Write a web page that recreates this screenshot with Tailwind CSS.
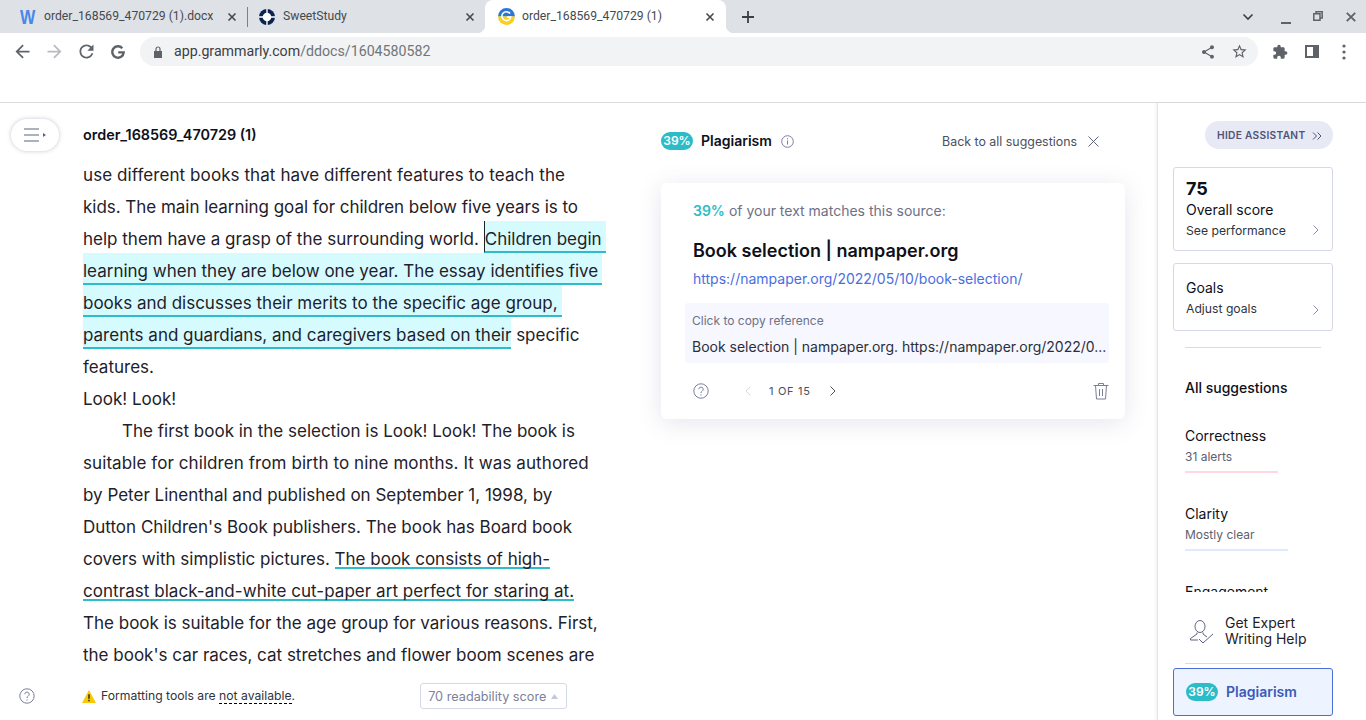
<!DOCTYPE html>
<html lang="en">
<head>
    <meta charset="UTF-8">
    <meta name="viewport" content="width=device-width, initial-scale=1.0">
    <title>order_168569_470729 (1)</title>
    <script src="https://cdn.jsdelivr.net/npm/@tailwindcss/browser@4"></script>
</head>
<body class="w-[1366px] h-[720px] overflow-hidden flex flex-col bg-white font-['Inter',sans-serif] text-[#0e101a]">

    <!-- tab strip -->
    <div class="h-[33px] bg-[#dee1e6] flex font-['Roboto',sans-serif] text-[12.2px] text-[#45494e] shrink-0">
        <div class="w-[247px] flex items-center pl-[20px] pr-[10px]">
            <span class="w-[15px] mr-[9px] font-['Liberation_Sans',sans-serif] text-[21px] leading-none text-[#4a86e8] scale-x-[0.77] origin-left font-bold">W</span>
            <span class="flex-1 whitespace-nowrap">order_168569_470729 (1).docx</span>
            <svg class="w-[10px] h-[10px]" viewBox="0 0 10 10" stroke="#45494e" stroke-width="1.6"><path d="M1.500 1.500l7 7M8.500 1.500l-7 7"/></svg>
        </div>
        <div class="w-px h-[20px] bg-[#7d8186] self-center"></div>
        <div class="w-[237px] flex items-center pl-[11px] pr-[10px]">
            <svg class="w-[16px] h-[16px] mr-[8px]" viewBox="0 0 16 16"><circle cx="8" cy="8" r="8" fill="#0b2350"/><circle cx="8" cy="8" r="4.300" fill="#fff"/><path d="M8 0v4M8 12v4M0 8h4M12 8h4" stroke="#fff" stroke-width="1.400"/></svg>
            <span class="flex-1">SweetStudy</span>
            <svg class="w-[10px] h-[10px]" viewBox="0 0 10 10" stroke="#45494e" stroke-width="1.6"><path d="M1.500 1.500l7 7M8.500 1.500l-7 7"/></svg>
        </div>
        <div class="relative w-[241px] bg-white rounded-t-[8px] flex items-center pl-[13px] pr-[11px] before:absolute before:-left-[8px] before:bottom-0 before:w-[8px] before:h-[8px] before:bg-[radial-gradient(circle_at_0_0,#dee1e6_8px,#ffffff_8.500px)] after:absolute after:-right-[8px] after:bottom-0 after:w-[8px] after:h-[8px] after:bg-[radial-gradient(circle_at_100%_0,#dee1e6_8px,#ffffff_8.500px)]">
            <svg class="w-[17px] h-[17px] mr-[7px]" viewBox="0 0 16 16"><path d="M0 8a8 8 0 0 1 16 0z" fill="#2a78d6"/><path d="M0 8a8 8 0 0 0 16 0z" fill="#f9d01c"/><path d="M11.300 5.200A4.200 4.200 0 1 0 12 8.600H8.600" fill="none" stroke="#fff" stroke-width="1.500"/></svg>
            <span class="flex-1">order_168569_470729 (1)</span>
            <svg class="w-[10px] h-[10px]" viewBox="0 0 10 10" stroke="#45494e" stroke-width="1.6"><path d="M1.500 1.500l7 7M8.500 1.500l-7 7"/></svg>
        </div>
        <div class="flex-1 flex items-center pl-[15px] pr-[10px]">
            <svg class="w-[14px] h-[14px]" viewBox="0 0 14 14" stroke="#3c4043" stroke-width="1.800"><path d="M7 1v12M1 7h12"/></svg>
            <div class="flex-1"></div>
            <svg class="w-[12px] h-[8px] mr-[27px]" viewBox="0 0 12 8" fill="none" stroke="#3c4043" stroke-width="1.600"><path d="M1.500 1.500L6 6l4.500-4.500"/></svg>
            <svg class="w-[10px] h-[10px] mt-[9px] mr-[22px]" viewBox="0 0 10 10" stroke="#5f6368" stroke-width="2"><path d="M0 7h10"/></svg>
            <svg class="w-[10px] h-[10px] -mt-[1px] mr-[23px]" viewBox="0 0 10 10" fill="none" stroke="#5f6368" stroke-width="1.500"><path d="M3 2.800V.800h6.200v6.200H7M.800 2.800H7v6.400H.800z"/></svg>
            <svg class="w-[10px] h-[10px]" viewBox="0 0 10 10" stroke="#5f6368" stroke-width="1.800"><path d="M.800.800l8.400 8.400M9.200.800L.800 9.200"/></svg>
        </div>
    </div>

    <!-- toolbar -->
    <div class="h-[37px] flex items-center pl-[12px] shrink-0">
        <svg class="w-[21px] h-[21px] mr-[11px]" viewBox="0 0 24 24" fill="#5f6368"><path d="M20 11H7.830l5.590-5.590L12 4l-8 8 8 8 1.410-1.410L7.830 13H20v-2z"/></svg>
        <svg class="w-[21px] h-[21px] mr-[11px] rotate-180" viewBox="0 0 24 24" fill="#b9bbbe"><path d="M20 11H7.830l5.590-5.590L12 4l-8 8 8 8 1.410-1.410L7.830 13H20v-2z"/></svg>
        <svg class="w-[21px] h-[21px] mr-[14px]" viewBox="0 0 24 24" fill="#5f6368"><path d="M17.650 6.350C16.200 4.900 14.210 4 12 4c-4.420 0-7.990 3.580-7.990 8s3.570 8 7.990 8c3.730 0 6.840-2.550 7.730-6h-2.080c-.82 2.330-3.040 4-5.650 4-3.310 0-6-2.690-6-6s2.690-6 6-6c1.660 0 3.140.69 4.220 1.780L13 11h7V4l-2.350 2.350z"/></svg>
        <svg class="w-[14px] h-[14px] mr-[15px]" viewBox="0 0 14 14" fill="none" stroke="#5f6368" stroke-width="2.400"><path d="M11.300 3.200A5.700 5.700 0 1 0 12.700 7.400H7.200"/></svg>
        <div class="w-[1118px] h-[29px] bg-[#f1f3f4] rounded-full flex items-center pl-[14px] pr-[10px] font-['Roboto',sans-serif] text-[14.200px]">
            <svg class="w-[8px] h-[12px] mr-[12px]" viewBox="0 0 8 12" fill="#5f6368"><path d="M0 5h8v7H0z"/><path d="M2 5V3a2 2 0 0 1 4 0v2" fill="none" stroke="#5f6368" stroke-width="1.200"/></svg>
            <span class="text-[#3c4043]">app.grammarly.com</span><span class="text-[#70757a]">/ddocs/1604580582</span>
            <div class="flex-1"></div>
            <svg class="w-[16px] h-[16px] mr-[15px]" viewBox="0 0 24 24" fill="#5f6368"><path d="M18 16.080c-.76 0-1.440.3-1.960.77L8.910 12.700c.05-.23.09-.46.09-.7s-.04-.47-.09-.7l7.050-4.110c.54.5 1.250.81 2.040.81 1.660 0 3-1.340 3-3s-1.340-3-3-3-3 1.340-3 3c0 .24.04.47.09.7L8.040 9.810C7.500 9.310 6.790 9 6 9c-1.660 0-3 1.340-3 3s1.340 3 3 3c.79 0 1.500-.31 2.040-.81l7.120 4.160c-.05.21-.08.43-.08.65 0 1.610 1.310 2.920 2.920 2.920 1.610 0 2.920-1.310 2.920-2.920s-1.310-2.920-2.920-2.920z"/></svg>
            <svg class="w-[17px] h-[17px]" viewBox="0 0 24 24" fill="#5f6368"><path d="M22 9.240l-7.190-.62L12 2 9.190 8.630 2 9.240l5.460 4.730L5.820 21 12 17.270 18.180 21l-1.630-7.030L22 9.240zM12 15.400l-3.760 2.270 1-4.280-3.320-2.880 4.380-.38L12 6.100l1.710 4.040 4.380.38-3.320 2.880 1 4.280L12 15.400z"/></svg>
        </div>
        <svg class="w-[16px] h-[16px] ml-[14px]" viewBox="0 0 24 24" fill="#5f6368"><path d="M20.500 11H19V7c0-1.100-.9-2-2-2h-4V3.500C13 2.120 11.880 1 10.500 1S8 2.120 8 3.500V5H4c-1.100 0-1.990.9-1.990 2v3.800H3.500c1.490 0 2.700 1.210 2.700 2.700s-1.210 2.700-2.700 2.700H2V20c0 1.100.9 2 2 2h3.800v-1.500c0-1.490 1.210-2.700 2.700-2.700 1.490 0 2.700 1.210 2.700 2.700V22H17c1.100 0 2-.9 2-2v-4h1.500c1.380 0 2.500-1.120 2.500-2.500S21.880 11 20.500 11z"/></svg>
        <svg class="w-[14px] h-[13px] ml-[17px]" viewBox="0 0 14 13" fill="none" stroke="#5f6368" stroke-width="2"><path d="M1 1h12v11H1z"/><path d="M10 1v11" stroke-width="4"/></svg>
        <svg class="w-[4px] h-[16px] ml-[23px]" viewBox="0 0 4 16" fill="#5f6368"><circle cx="2" cy="2" r="1.600"/><circle cx="2" cy="8" r="1.600"/><circle cx="2" cy="14" r="1.600"/></svg>
    </div>

    <!-- empty band above the app -->
    <div class="h-[33px] border-b border-[#dcdcdc] shrink-0"></div>

    <div class="flex flex-1 min-h-0">
        <!-- editor -->
        <div class="relative w-[650px] shrink-0 pl-[83px] flex flex-col">
            <div class="absolute left-[11px] top-[16px] w-[48px] h-[32px] bg-white rounded-full shadow-[0_0_4px_rgba(60,70,110,0.3)] flex items-center justify-center">
                <svg class="w-[22px] h-[14px]" viewBox="0 0 22 14" fill="none" stroke="#5d6281" stroke-width="1"><path d="M0 1h15M0 7h15M0 13h15"/><path d="M19 5l3 2-3 2z" fill="#5d6281" stroke="none"/></svg>
            </div>
            <div class="h-[56px] pt-[22px] text-[14.400px] leading-[20px] font-semibold">order_168569_470729 (1)</div>
            <div class="text-[17px] leading-[32px] whitespace-nowrap h-[512px] overflow-hidden text-[#1f2129]">
                <div class="h-8 tracking-[0.08px]">use different books that have different features to teach the</div>
                <div class="h-8 tracking-[-0.03px]">kids. The main learning goal for children below five years is to</div>
                <div class="h-8">help them have a grasp of the surrounding world. <span class="inline-block h-[32px] leading-[36px] -mt-[2px] align-top bg-[#d6fbff] border-b-2 border-[#2fbcc8] border-l border-l-[#1f2129] pr-[4px]">Children begin</span></div>
                <div class="h-8"><span class="inline-block h-[32px] leading-[36px] -mt-[2px] align-top bg-[#d6fbff] border-b-2 border-[#2fbcc8] pr-[4px]">learning when they are below one year. The essay identifies five</span></div>
                <div class="h-8"><span class="inline-block h-[32px] leading-[36px] -mt-[2px] align-top bg-[#d6fbff] border-b-2 border-[#2fbcc8] pr-[4px]">books and discusses their merits to the specific age group,</span></div>
                <div class="h-8"><span class="inline-block h-[32px] leading-[36px] -mt-[2px] align-top bg-[#d6fbff] border-b-2 border-[#2fbcc8]">parents and guardians, and caregivers based on their</span> specific</div>
                <div class="h-8">features.</div>
                <div class="h-8">Look! Look!</div>
                <div class="h-8 pl-[39px]">The first book in the selection is Look! Look! The book is</div>
                <div class="h-8 tracking-[0.08px]">suitable for children from birth to nine months. It was authored</div>
                <div class="h-8">by Peter Linenthal and published on September 1, 1998, by</div>
                <div class="h-8">Dutton Children's Book publishers. The book has Board book</div>
                <div class="h-8">covers with simplistic pictures. <span class="inline-block h-[26px] border-b-2 border-[#2fbcc8]">The book consists of high-</span></div>
                <div class="h-8 tracking-[0.05px]"><span class="inline-block h-[26px] border-b-2 border-[#2fbcc8]">contrast black-and-white cut-paper art perfect for staring at.</span></div>
                <div class="h-8">The book is suitable for the age group for various reasons. First,</div>
                <div class="h-8">the book's car races, cat stretches and flower boom scenes are</div>
            </div>
            <div class="absolute left-[19px] top-[585px]">
                <svg class="w-[16px] h-[16px]" viewBox="0 0 16 16" fill="none" stroke="#7a7f9a" stroke-width="1"><circle cx="8" cy="8" r="7.200"/><path d="M5.800 6.200a2.200 2.200 0 1 1 3.400 1.900c-.8.5-1.200.9-1.200 1.900"/><path d="M8 11.400v1.200"/></svg>
            </div>
            <div class="flex items-center h-[26px] mt-[12px] text-[12.200px] text-[#30333d]">
                <svg class="w-[14px] h-[13px] -ml-[1px] mr-[5px]" viewBox="0 0 13 12"><path d="M6.500 0L13 12H0z" fill="#f9c908"/><path d="M6.500 4v4M6.500 9v1.500" stroke="#222" stroke-width="1.300"/></svg>
                <span>Formatting tools are <span class="border-b border-dashed border-black">not available</span>.</span>
                <div class="ml-[125px] w-[147px] h-[26px] rounded-[3px] border border-[#d5d8e8] flex items-center pl-[7px] pt-[1px] text-[12.700px] text-[#7d8198]">
                    70 readability score
                    <svg class="w-[7px] h-[5px] ml-[5px]" viewBox="0 0 7 5" fill="#c4c8d8"><path d="M3.500 0L7 5H0z"/></svg>
                </div>
            </div>
        </div>

        <!-- plagiarism card column -->
        <div class="w-[507px] shrink-0 pl-[11px] pr-[32px]">
            <div class="h-[80px] pt-[29px] flex items-start">
                <span class="w-[32px] h-[18px] rounded-full bg-[#2bbcc8] text-white text-[12px] leading-[18px] font-semibold text-center">39%</span>
                <span class="ml-[8px] text-[14px] leading-[18px] font-semibold">Plagiarism</span>
                <svg class="w-[13px] h-[13px] ml-[9px] mt-[3px]" viewBox="0 0 13 13" fill="none" stroke="#7a7f9a"><circle cx="6.500" cy="6.500" r="5.800"/><path d="M6.500 5.500v4M6.500 3.200v1.200"/></svg>
                <div class="flex-1"></div>
                <span class="text-[12.400px] leading-[19px] text-[#4b4f60]">Back to all suggestions</span>
                <svg class="w-[11px] h-[11px] ml-[11px] mr-[26px] mt-[4px]" viewBox="0 0 11 11" stroke="#5d6281"><path d="M.5.500l10 10M10.500.500l-10 10"/></svg>
            </div>
            <div class="w-[464px] h-[236px] bg-white rounded-[6px] shadow-[0_4px_24px_rgba(70,80,130,0.14)] pt-[19px] pl-[24px] pr-[16px] flex flex-col">
                <div class="pl-[8px] text-[14px] leading-[18px] text-[#6d7186]"><span class="font-semibold text-[#2bbcc8]">39%</span> of your text matches this source:</div>
                <div class="pl-[8px] mt-[19px] text-[18px] leading-[24px] font-semibold">Book selection | nampaper.org</div>
                <div class="pl-[8px] mt-[6px] text-[14px] leading-[20px] text-[#4a6ee0]">https://nampaper.org/2022/05/10/book-selection/</div>
                <div class="mt-[14px] h-[60px] bg-[#f6f7ff] rounded-[3px] pl-[7px] pt-[10px]">
                    <div class="text-[12px] leading-[15px] text-[#6d7186]">Click to copy reference</div>
                    <div class="mt-[10px] text-[14px] leading-[18px] text-[#2c2f3a] whitespace-nowrap">Book selection | nampaper.org. https://nampaper.org/2022/0...</div>
                </div>
                <div class="flex items-center mt-[16px] pl-[8px] h-[24px]">
                    <svg class="w-[16px] h-[16px]" viewBox="0 0 16 16" fill="none" stroke="#7a7f9a"><circle cx="8" cy="8" r="7.200"/><path d="M5.800 6.200a2.200 2.200 0 1 1 3.400 1.900c-.8.5-1.200.9-1.200 1.900"/><path d="M8 11.400v1.200"/></svg>
                    <svg class="w-[6px] h-[10px] ml-[36px]" viewBox="0 0 6 10" fill="none" stroke="#d6d8e4"><path d="M5.500.500L1 5l4.500 4.500"/></svg>
                    <span class="ml-[18px] text-[11px] tracking-[0.7px] text-[#4b4f60]">1 OF 15</span>
                    <svg class="w-[6px] h-[10px] ml-[19px]" viewBox="0 0 6 10" fill="none" stroke="#4b4f60"><path d="M.5.500L5 5 .5 9.500"/></svg>
                    <div class="flex-1"></div>
                    <svg class="w-[16px] h-[18px]" viewBox="0 0 16 18" fill="none" stroke="#7a7f9a"><path d="M.5 3.500h15M5.500 3.500V1.500h5v2M2.500 3.500l1 13.500h9l1-13.500M6.500 7v7M9.500 7v7"/></svg>
                </div>
            </div>
        </div>

        <!-- assistant -->
        <div class="flex-1 border-l border-[#e3e3e3] shadow-[-2px_0_3px_rgba(0,0,0,0.04)] pl-[15px] pr-[33px] flex flex-col min-w-0">
            <div class="flex justify-end pt-[18px] h-[64px]">
                <div class="w-[128px] h-[28px] rounded-full bg-[#e7e9f5] flex items-center pl-[12px] pt-[1px] text-[10.200px] font-semibold tracking-[0.3px] text-[#4f5478]">
                    HIDE ASSISTANT
                    <svg class="w-[10px] h-[8px] ml-[7px]" viewBox="0 0 10 8" fill="none" stroke="#4f5478"><path d="M1 .5L4.500 4 1 7.500M5.500.5L9 4 5.500 7.500"/></svg>
                </div>
            </div>
            <div class="h-[84px] rounded-[3px] border border-[#d5d8e8] px-[12px] pt-[10px] relative">
                <div class="text-[18px] leading-[22px] font-bold">75</div>
                <div class="text-[14px] leading-[20px]">Overall score</div>
                <div class="mt-[2px] text-[12.200px] leading-[18px] text-[#30333d]">See performance</div>
                <svg class="absolute right-[13px] bottom-[15px] w-[6px] h-[10px]" viewBox="0 0 6 10" fill="none" stroke="#8a8ea6"><path d="M.5.500L5 5 .5 9.500"/></svg>
            </div>
            <div class="h-[68px] mt-[12px] rounded-[3px] border border-[#d5d8e8] px-[12px] pt-[14px] relative">
                <div class="text-[14px] leading-[20px]">Goals</div>
                <div class="mt-[2px] text-[12.200px] leading-[18px] text-[#30333d]">Adjust goals</div>
                <svg class="absolute right-[13px] bottom-[15px] w-[6px] h-[10px]" viewBox="0 0 6 10" fill="none" stroke="#8a8ea6"><path d="M.5.500L5 5 .5 9.500"/></svg>
            </div>
            <div class="mx-[12px] mt-[16px] h-px bg-[#d8dae6]"></div>
            <div class="h-[244px] overflow-hidden pl-[12px]">
                <div class="mt-[31px] text-[14px] leading-[18px] font-medium">All suggestions</div>
                <div class="mt-[30px] text-[14px] leading-[18px]">Correctness</div>
                <div class="mt-[3px] text-[12px] leading-[18px] text-[#5d6070]">31 alerts</div>
                <div class="mt-[5px] w-[93px] h-[2px] bg-[#ffd9e0]"></div>
                <div class="mt-[32px] text-[14px] leading-[18px]">Clarity</div>
                <div class="mt-[3px] text-[12px] leading-[18px] text-[#5d6070]">Mostly clear</div>
                <div class="mt-[5px] w-[103px] h-[2px] bg-[#dfeaff]"></div>
                <div class="mt-[32px] text-[14px] leading-[18px]">Engagement</div>
            </div>
            <div class="h-[71px] flex items-start pt-[23px] pl-[17px]">
                <svg class="w-[24px] h-[24px] mt-[5px] mr-[11px]" viewBox="0 0 24 24" fill="none" stroke="#5d6281"><ellipse cx="10" cy="6.500" rx="5" ry="6"/><path d="M7 12.500v1.500L.5 18.500v1.500H8M13 12.500v1.500l4 3"/><path d="M9 19l4 4 10-9"/></svg>
                <div class="text-[14px] leading-[16px] text-[#1f2129]">Get Expert<br>Writing Help</div>
            </div>
            <div class="mx-[12px] h-px bg-[#d8dae6]"></div>
            <div class="mt-[4px] h-[48px] rounded-[3px] border border-[#4a6fd8] bg-[#edf4ff] flex items-center pl-[12px] pb-[1px]">
                <span class="w-[32px] h-[18px] rounded-full bg-[#2bbcc8] text-white text-[12px] leading-[18px] font-semibold text-center">39%</span>
                <span class="ml-[8px] text-[14px] font-semibold text-[#3a5bb8]">Plagiarism</span>
            </div>
        </div>
    </div>
</body>
</html>
